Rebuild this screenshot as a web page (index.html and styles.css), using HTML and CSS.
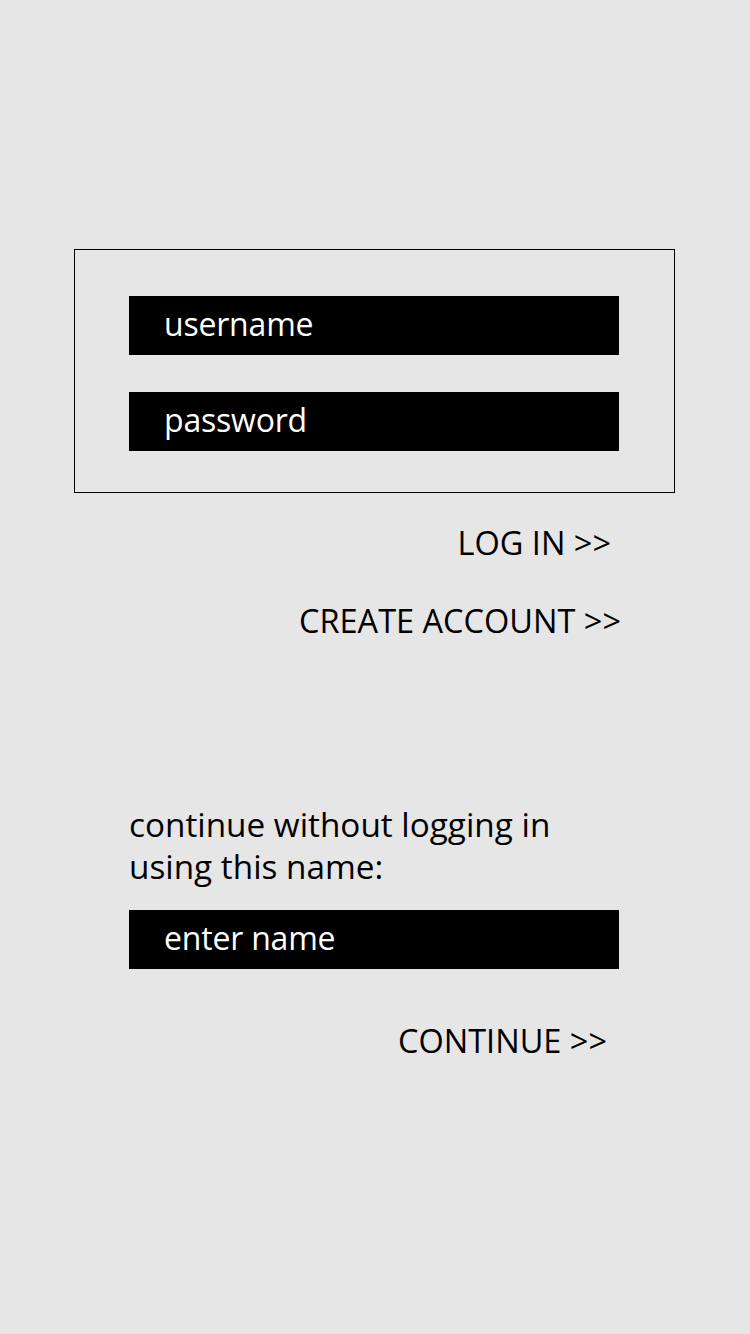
FILE: index.html
```html
<!DOCTYPE html>
<html>
<head>
<meta charset="utf-8">
<link rel="stylesheet" href="styles.css">
</head>
<body>
<div class="page">
  <div class="login-box">
    <div class="field">username</div>
    <div class="field">password</div>
  </div>
  <div class="actions">
    <div class="action login">LOG IN &gt;&gt;</div>
    <div class="action create">CREATE ACCOUNT &gt;&gt;</div>
  </div>
  <div class="guest">
    <p class="guest-text">continue without logging in<br>using this name:</p>
    <div class="field">enter name</div>
    <div class="action continue">CONTINUE &gt;&gt;</div>
  </div>
</div>
</body>
</html>
```
FILE: styles.css
```css
html, body {
  margin: 0;
  padding: 0;
  background: #e6e6e6;
}
.page {
  width: 750px;
  height: 1334px;
  font-family: "Open Sans", "Noto Sans", sans-serif;
  color: #000;
  padding-top: 249px;
  box-sizing: border-box;
}
.login-box {
  margin-left: 74px;
  width: 601px;
  height: 244px;
  box-sizing: border-box;
  border: 1px solid #000;
  padding: 46px 0 0 54px;
  display: flex;
  flex-direction: column;
  gap: 37px;
}
.field {
  width: 490px;
  height: 59px;
  background: #000;
  color: #fff;
  font-size: 32px;
  line-height: 55px;
  padding-left: 35px;
  box-sizing: border-box;
  letter-spacing: -0.2px;
}
.actions {
  display: flex;
  flex-direction: column;
  align-items: flex-end;
  padding-top: 26px;
  gap: 30px;
}
.action {
  font-size: 32.5px;
  line-height: 48px;
}
.login { margin-right: 139px; }
.create { margin-right: 129px; }
.guest {
  padding: 158px 0 0 129px;
  display: flex;
  flex-direction: column;
}
.guest-text {
  margin: 0 0 23px;
  font-size: 33.3px;
  line-height: 42px;
}
.continue {
  align-self: flex-end;
  margin-right: 143px;
  margin-top: 48px;
}
```
